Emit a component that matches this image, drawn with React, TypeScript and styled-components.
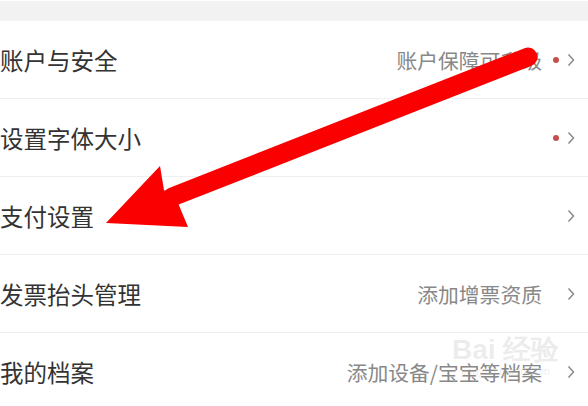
import styled, { createGlobalStyle } from "styled-components";

const GlobalStyle = createGlobalStyle`
  html, body {
    margin: 0;
    padding: 0;
    background: #ffffff;
    font-family: "Noto Sans CJK SC", "Noto Sans", sans-serif;
  }
`;

const Page = styled.div`
  position: relative;
  width: 588px;
  height: 406px;
  overflow: hidden;
  background: #ffffff;
  padding-top: 1px;
  box-sizing: border-box;
`;

const GreyBand = styled.div`
  height: 20px;
  background: #f2f2f2;
`;

const List = styled.div`
  display: flex;
  flex-direction: column;
`;

const Row = styled.div`
  height: 78px;
  box-sizing: border-box;
  display: flex;
  align-items: center;
  justify-content: space-between;
  padding: 0 13px 0 0;
  border-bottom: 1px solid #efefef;
  &:last-child {
    border-bottom: none;
  }
`;

const Title = styled.span`
  font-size: 23.5px;
  color: #333333;
`;

const Right = styled.div`
  display: flex;
  align-items: center;
`;

const Hint = styled.span`
  font-size: 20.8px;
  color: #888888;
`;

const DotSlot = styled.span`
  width: 22px;
  display: flex;
  justify-content: center;
  align-items: center;
`;

const Dot = styled.span`
  width: 6px;
  height: 6px;
  border-radius: 50%;
  background: #c4504c;
  margin-left: 6px;
`;

const Chevron = styled.svg`
  width: 8px;
  height: 14px;
  margin-left: 3px;
`;

const Overlay = styled.svg`
  position: absolute;
  left: 0;
  top: 0;
  pointer-events: none;
`;

const Watermark = styled.div`
  position: absolute;
  left: 452px;
  top: 336px;
  color: rgba(170, 170, 170, 0.22);
  font-family: "Liberation Sans", sans-serif;
  line-height: 1;
  text-align: center;
`;

const WmBig = styled.div`
  font-size: 28px;
  font-weight: bold;
`;

const WmSmall = styled.div`
  font-size: 11px;
  margin-top: 2px;
`;

type Item = { title: string; hint?: string; dot?: boolean };

const items: Item[] = [
  { title: "账户与安全", hint: "账户保障可升级", dot: true },
  { title: "设置字体大小", dot: true },
  { title: "支付设置" },
  { title: "发票抬头管理", hint: "添加增票资质" },
  { title: "我的档案", hint: "添加设备/宝宝等档案" },
];

function App() {
  return (
    <Page>
      <GlobalStyle />
      <GreyBand />
      <List>
        {items.map((it) => (
          <Row key={it.title}>
            <Title>{it.title}</Title>
            <Right>
              {it.hint && <Hint>{it.hint}</Hint>}
              <DotSlot>{it.dot && <Dot />}</DotSlot>
              <Chevron viewBox="0 0 8 14">
                <polyline
                  points="1.5,1.5 6.5,7 1.5,12.5"
                  fill="none"
                  stroke="#8a8a8a"
                  strokeWidth="1.5"
                />
              </Chevron>
            </Right>
          </Row>
        ))}
      </List>
      <Watermark>
        <WmBig>Bai 经验</WmBig>
        <WmSmall>jingyan.baidu.com</WmSmall>
      </Watermark>
      <Overlay width="588" height="406" viewBox="0 0 588 406">
        <line
          x1="528"
          y1="57"
          x2="172"
          y2="197"
          stroke="#fa0000"
          strokeWidth="19"
          strokeLinecap="round"
        />
        <polygon
          points="106,223 160,166 164,190 178,203 188,227"
          fill="#fa0000"
        />
      </Overlay>
    </Page>
  );
}

export default App;
